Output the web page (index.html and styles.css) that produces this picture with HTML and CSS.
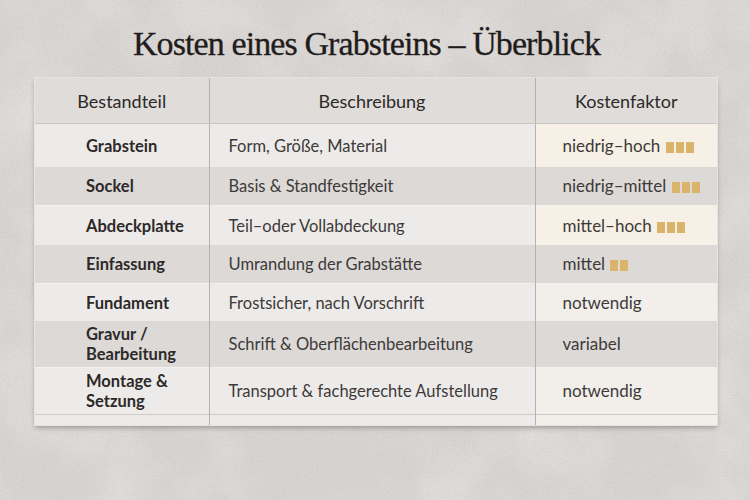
FILE: index.html
```html
<!DOCTYPE html>
<html lang="de">
<head>
<meta charset="utf-8">
<link rel="stylesheet" href="styles.css">
</head>
<body>
<svg class="stone" width="750" height="500" aria-hidden="true">
  <filter id="grain" x="0" y="0" width="100%" height="100%">
    <feTurbulence type="fractalNoise" baseFrequency="0.9" numOctaves="3" seed="7"/>
    <feColorMatrix type="matrix" values="0 0 0 0 0.45  0 0 0 0 0.43  0 0 0 0 0.42  0 0 0 -2.2 1.25"/>
  </filter>
  <filter id="cloud" x="0" y="0" width="100%" height="100%">
    <feTurbulence type="fractalNoise" baseFrequency="0.012" numOctaves="3" seed="3"/>
    <feColorMatrix type="matrix" values="0 0 0 0 1  0 0 0 0 1  0 0 0 0 1  0 0 0 1.1 -0.45"/>
  </filter>
  <rect width="750" height="500" filter="url(#cloud)" opacity="0.5"/>
  <rect width="750" height="500" filter="url(#grain)" opacity="0.28"/>
</svg>
<div class="page">
  <h1 class="title">Kosten eines Grabsteins – Überblick</h1>
  <table class="costs">
    <colgroup><col class="c1"><col class="c2"><col class="c3"></colgroup>
    <thead>
      <tr><th>Bestandteil</th><th>Beschreibung</th><th>Kostenfaktor</th></tr>
    </thead>
    <tbody>
      <tr class="light r1"><td class="part">Grabstein</td><td class="desc">Form, Größe, Material</td><td class="cost cream">niedrig–hoch <span class="bars"><i></i><i></i><i></i></span></td></tr>
      <tr class="dark r2"><td class="part">Sockel</td><td class="desc">Basis &amp; Standfestigkeit</td><td class="cost">niedrig–mittel <span class="bars"><i></i><i></i><i></i></span></td></tr>
      <tr class="light r3"><td class="part">Abdeckplatte</td><td class="desc">Teil–oder Vollabdeckung</td><td class="cost cream">mittel–hoch <span class="bars"><i></i><i></i><i></i></span></td></tr>
      <tr class="dark r4"><td class="part">Einfassung</td><td class="desc">Umrandung der Grabstätte</td><td class="cost">mittel <span class="bars"><i></i><i></i></span></td></tr>
      <tr class="light r5"><td class="part">Fundament</td><td class="desc">Frostsicher, nach Vorschrift</td><td class="cost cream2">notwendig</td></tr>
      <tr class="dark r6"><td class="part two">Gravur /<br>Bearbeitung</td><td class="desc">Schrift &amp; Oberflächenbearbeitung</td><td class="cost">variabel</td></tr>
      <tr class="light r7"><td class="part two">Montage &amp;<br>Setzung</td><td class="desc">Transport &amp; fachgerechte Aufstellung</td><td class="cost cream2">notwendig</td></tr>
      <tr class="light foot"><td></td><td></td><td class="cream2"></td></tr>
    </tbody>
  </table>
</div>
</body>
</html>
```

FILE: styles.css
```css
html, body {
  margin: 0;
  padding: 0;
}
body {
  position: relative;
  width: 750px;
  height: 500px;
  overflow: hidden;
  background: #d8d4d2;
  font-family: "Lato", "Open Sans", sans-serif;
  color: #2f2c2b;
}
.stone {
  position: absolute;
  left: 0;
  top: 0;
  z-index: 0;
}
.page {
  position: relative;
  z-index: 1;
  padding: 24px 0 0 35px;
}
.title {
  margin: 0 0 0 -35px;
  width: 750px;
  text-align: center;
  font-family: "Liberation Serif", serif;
  font-weight: normal;
  font-size: 34px;
  line-height: 40px;
  letter-spacing: -0.9px;
  color: #1f1c1b;
  -webkit-text-stroke: 0.3px #1f1c1b;
  padding-right: 17px;
  box-sizing: border-box;
}
.costs {
  margin-top: 14px;
  width: 682px;
  border-collapse: collapse;
  table-layout: fixed;
  box-shadow: 0 0 0 1px #e6e3e1, 0 3px 5px rgba(0,0,0,0.28);
  background: #eceae8;
}
.c1 { width: 174px; }
.c2 { width: 326px; }
.c3 { width: 182px; }
th {
  height: 45px;
  padding: 0;
  font-weight: normal;
  font-size: 18px;
  background: #dfdcda;
  border-bottom: 1px solid #c9c5c3;
  text-align: center;
  color: #2c2928;
}
th + th, td + td {
  border-left: 1px solid #b5b1af;
}
td {
  padding: 0 0 0 19px;
  font-size: 17px;
  line-height: 20px;
  color: #3d3a39;
  vertical-align: middle;
}
td.desc {
  font-size: 16.5px;
}
td.part {
  padding-left: 51px;
  font-weight: bold;
  font-size: 16.5px;
  color: #2c2928;
}
td.part.two {
  line-height: 20px;
}
td.cost {
  padding-left: 27px;
}
.light td { background: #edebe9; border-top: 1px solid #f3f1ef; }
.dark td { background: #dcd9d7; }
.light td.cream { background: #f6f0e6; }
.light td.cream2 { background: #f2efeb; }
.r1 td { height: 43px; }
.r2 td { height: 38px; }
.r3 td { height: 39px; }
.r4 td { height: 38px; }
.r5 td { height: 37px; }
.r6 td { height: 46px; }
.r7 td { height: 46px; }
.foot td { height: 10px; border-top: 1px solid #cfcbc9; padding: 0; }
.bars {
  display: inline-flex;
  gap: 2px;
  vertical-align: -1px;
  margin-left: 1px;
}
.bars i {
  display: block;
  width: 8px;
  height: 11px;
  background: #d9b46a;
}
```
